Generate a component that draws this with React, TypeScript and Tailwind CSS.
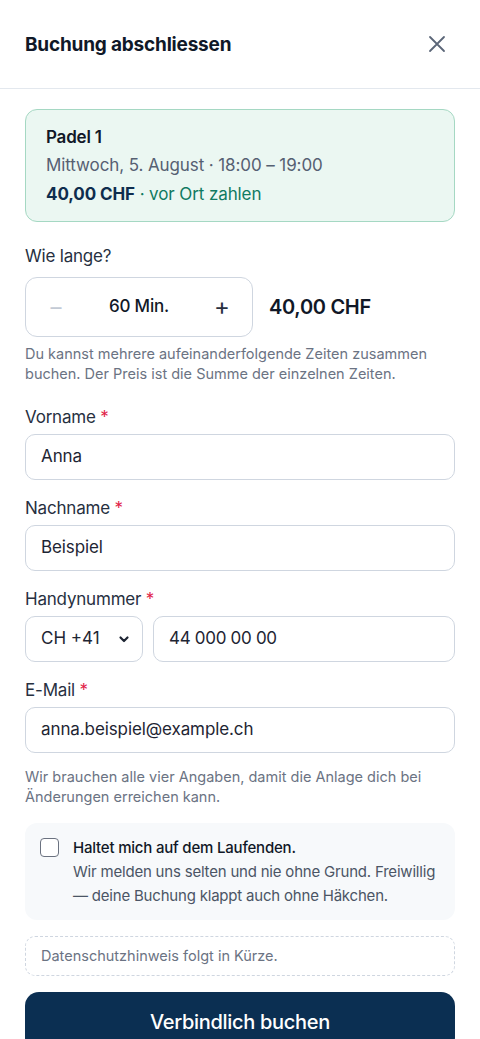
import React from "react";

const font = { fontFamily: "Inter, 'Noto Sans', sans-serif" };

function Label({ children }: { children: React.ReactNode }) {
  return (
    <div className="text-[17px] leading-[24px] text-[#27303f] tracking-[-0.2px]">
      {children} <span className="text-[#e11d48]">*</span>
    </div>
  );
}

function Field({ label, value }: { label: string; value: string }) {
  return (
    <div className="flex flex-col gap-[5px]">
      <Label>{label}</Label>
      <div className="h-[46px] rounded-[10px] border border-[#cfd6e0] bg-white px-[15px] flex items-center text-[17px] text-[#1e2533] tracking-[-0.1px]">
        {value}
      </div>
    </div>
  );
}

export default function App() {
  return (
    <div style={font} className="w-[480px] min-h-[1039px] bg-white overflow-hidden">
      <div className="h-[89px] flex items-center justify-between px-[25px] border-b border-[#e3e8ee]">
        <h1 className="text-[19px] font-bold text-[#101828] tracking-[-0.2px] pt-[2px]">Buchung abschliessen</h1>
        <svg width="20" height="20" viewBox="0 0 20 20" className="mr-[8px]" fill="none" stroke="#5b6678" strokeWidth="1.8" strokeLinecap="round">
          <path d="M3 3L17 17M17 3L3 17" />
        </svg>
      </div>

      <div className="px-[25px] pt-[20px] flex flex-col">
        <div className="rounded-[12px] border border-[#a5d8c3] bg-[#ebf7f2] px-[20px] pt-[15px] pb-[14px] flex flex-col gap-[3px]">
          <div className="text-[17px] font-semibold text-[#111827] leading-[24px] tracking-[-0.2px]">Padel 1</div>
          <div className="text-[17px] text-[#566072] leading-[26px] tracking-[-0.1px]">Mittwoch, 5. August · 18:00 – 19:00</div>
          <div className="text-[17px] leading-[26px] tracking-[-0.1px]">
            <span className="font-bold text-[#0e2d4e]">40,00 CHF</span>
            <span className="text-[#107a62]"> · vor Ort zahlen</span>
          </div>
        </div>

        <div className="mt-[22px] text-[17px] leading-[24px] text-[#27303f] tracking-[-0.2px]">Wie lange?</div>
        <div className="mt-[9px] flex items-center gap-[16px]">
          <div className="w-[228px] h-[60px] rounded-[12px] border border-[#cfd6e0] grid grid-cols-[60px_1fr_60px] items-center">
            <span className="text-center text-[22px] text-[#c3cad5] leading-none">–</span>
            <span className="text-center text-[17px] font-medium text-[#111827] tracking-[-0.2px]">60 Min.</span>
            <span className="text-center text-[24px] text-[#27303f] leading-none">+</span>
          </div>
          <div className="text-[20px] font-semibold text-[#111827] tracking-[-0.3px]">40,00 CHF</div>
        </div>
        <p className="mt-[7px] text-[14.5px] leading-[20px] text-[#6b7383]">
          Du kannst mehrere aufeinanderfolgende Zeiten zusammen buchen. Der Preis ist die Summe der einzelnen Zeiten.
        </p>

        <div className="mt-[21px] flex flex-col gap-[16px]">
          <Field label="Vorname" value="Anna" />
          <Field label="Nachname" value="Beispiel" />
          <div className="flex flex-col gap-[5px]">
            <Label>Handynummer</Label>
            <div className="flex gap-[10px]">
              <div className="w-[118px] h-[46px] rounded-[10px] border border-[#cfd6e0] bg-white pl-[15px] pr-[12px] flex items-center justify-between text-[17px] text-[#1e2533]">
                <span>CH +41</span>
                <svg width="12" height="12" viewBox="0 0 12 12" fill="none" stroke="#1e2533" strokeWidth="2.2" strokeLinecap="round" strokeLinejoin="round">
                  <path d="M2.5 4.5L6 8L9.5 4.5" />
                </svg>
              </div>
              <div className="flex-1 h-[46px] rounded-[10px] border border-[#cfd6e0] bg-white px-[15px] flex items-center text-[17px] text-[#1e2533] tracking-[-0.3px]">
                44 000 00 00
              </div>
            </div>
          </div>
          <Field label="E-Mail" value="anna.beispiel@example.ch" />
        </div>

        <p className="mt-[14px] text-[14.5px] leading-[20px] text-[#6b7383]">
          Wir brauchen alle vier Angaben, damit die Anlage dich bei Änderungen erreichen kann.
        </p>

        <div className="mt-[16px] rounded-[12px] bg-[#f7f9fb] px-[15px] pt-[14px] pb-[12px] flex gap-[14px]">
          <div className="mt-[1px] w-[19px] h-[19px] shrink-0 rounded-[4px] border-[1.5px] border-[#6b7280] bg-white" />
          <div className="flex flex-col">
            <div className="text-[15px] leading-[22px] font-medium text-[#111827] tracking-[-0.2px]">Haltet mich auf dem Laufenden.</div>
            <div className="mt-[1px] text-[15px] leading-[24px] text-[#4b5565] tracking-[-0.2px]">
              Wir melden uns selten und nie ohne Grund. Freiwillig — deine Buchung klappt auch ohne Häkchen.
            </div>
          </div>
        </div>

        <div className="mt-[16px] h-[40px] rounded-[10px] border border-dashed border-[#cfd6e0] px-[15px] flex items-center text-[14.5px] text-[#6b7383]">
          Datenschutzhinweis folgt in Kürze.
        </div>

        <div className="mt-[16px] h-[60px] rounded-[14px] bg-[#0b2f52] flex items-center justify-center text-white text-[20px] font-medium tracking-[-0.3px]">
          Verbindlich buchen
        </div>
      </div>
    </div>
  );
}
